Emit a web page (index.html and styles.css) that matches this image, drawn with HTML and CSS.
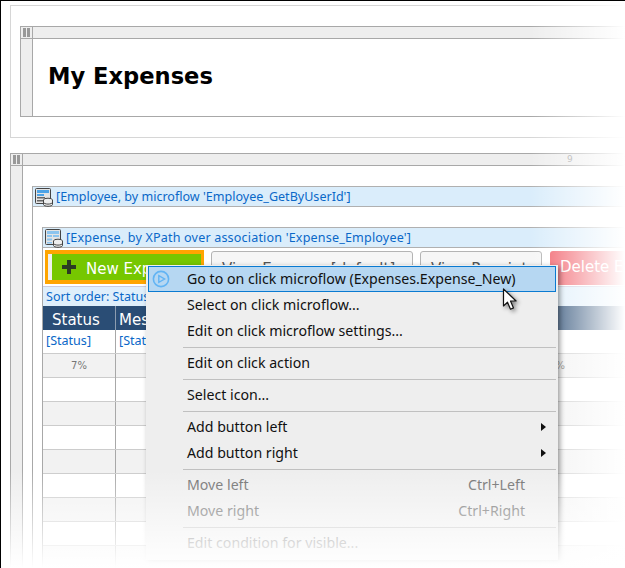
FILE: index.html
```html
<!DOCTYPE html>
<html>
<head>
<title>My Expenses</title>
<link rel="stylesheet" href="styles.css">
</head>
<body>
<div class="page">

	<div class="section">
		<div class="layout">
			<div class="handle"><i></i><i></i></div>
			<div class="topbar"></div>
			<div class="sidebar"></div>
			<div class="title-body"><h1>My Expenses</h1></div>
		</div>
	</div>

	<div class="layout layout-main">
		<div class="handle"><i></i><i></i></div>
		<div class="topbar"><span class="colsize">9</span></div>
		<div class="sidebar"></div>
		<div class="main-body">
			<div class="dataview">
				<div class="dv-head">
					<svg class="dv-icon" width="18" height="19" viewBox="0 0 18 19">
						<rect x="0.5" y="0.5" width="15" height="15" rx="1" fill="#e4e4e4" stroke="#444"/>
						<rect x="2" y="2" width="12" height="3" fill="#4da3e6"/>
						<rect x="2" y="6" width="7" height="2" fill="#4da3e6"/>
						<rect x="2" y="9" width="8" height="1.5" fill="#666"/>
						<rect x="2" y="12" width="6" height="1.5" fill="#666"/>
						<ellipse cx="13" cy="12" rx="4.5" ry="1.8" fill="#eee" stroke="#444"/>
						<path d="M8.5 12v4.5c0 1 2 1.8 4.5 1.8s4.5-.8 4.5-1.8V12" fill="#eee" stroke="#444"/>
						<path d="M8.5 14.3c0 1 2 1.8 4.5 1.8s4.5-.8 4.5-1.8" fill="none" stroke="#444"/>
					</svg>
					<span>[Employee, by microflow 'Employee_GetByUserId']</span>
				</div>
				<div class="dv-body">
					<div class="dataview">
						<div class="dv-head dv-head-inner">
							<svg class="dv-icon" width="18" height="19" viewBox="0 0 18 19">
								<rect x="0.5" y="0.5" width="15" height="15" rx="1" fill="#e4e4e4" stroke="#444"/>
								<rect x="2" y="2" width="12" height="3" fill="#8cc4ee"/>
								<rect x="2" y="6" width="5" height="2" fill="#8cc4ee"/>
								<rect x="8" y="6" width="6" height="2" fill="#8cc4ee"/>
								<rect x="2" y="9.5" width="5" height="2" fill="#8cc4ee"/>
								<rect x="2" y="13" width="5" height="1.5" fill="#8cc4ee"/>
								<ellipse cx="13" cy="12" rx="4.5" ry="1.8" fill="#eee" stroke="#444"/>
								<path d="M8.5 12v4.5c0 1 2 1.8 4.5 1.8s4.5-.8 4.5-1.8V12" fill="#eee" stroke="#444"/>
								<path d="M8.5 14.3c0 1 2 1.8 4.5 1.8s4.5-.8 4.5-1.8" fill="none" stroke="#444"/>
							</svg>
							<span>[Expense, by XPath over association 'Expense_Employee']</span>
						</div>
						<div class="toolbar">
							<div class="btn btn-new">
								<svg width="14" height="14" viewBox="0 0 14 14"><path d="M5 0h4v5h5v4H9v5H5V9H0V5h5z" fill="#2c3a24"/></svg>
								<span class="btn-new-label">New Expense</span>
							</div>
							<div class="btn btn-view btn-default">View Expense [default]</div>
							<div class="btn btn-view btn-receipt">View Receipt</div>
							<div class="btn btn-delete">Delete Expense</div>
						</div>
						<div class="sortbar">Sort order: Status</div>
						<div class="grid-row grid-head"><div>Status</div><div>Message</div><div></div></div>
						<div class="grid-row grid-attr"><div>[Status]</div><div>[Status]</div><div></div></div>
						<div class="grid-row grid-pct alt"><div>7%</div><div></div><div>7%</div></div>
						<div class="grid-row"><div></div><div></div><div></div></div>
						<div class="grid-row alt"><div></div><div></div><div></div></div>
						<div class="grid-row"><div></div><div></div><div></div></div>
						<div class="grid-row alt"><div></div><div></div><div></div></div>
						<div class="grid-row"><div></div><div></div><div></div></div>
						<div class="grid-row alt"><div></div><div></div><div></div></div>
						<div class="grid-row"><div></div><div></div><div></div></div>
						<div class="grid-row alt"><div></div><div></div><div></div></div>
					</div>
				</div>
			</div>
		</div>
	</div>

	<div class="fade-right"></div>

	<div class="menu">
		<div class="item active">
			<svg class="item-icon" width="18" height="18" viewBox="0 0 18 18">
				<circle cx="9" cy="9" r="7.6" fill="none" stroke="#62b4f4" stroke-width="1.6"/>
				<path d="M6.8 5.6L12.6 9l-5.8 3.4z" fill="none" stroke="#62b4f4" stroke-width="1.4"/>
			</svg>
			Go to on click microflow (Expenses.Expense_New)
		</div>
		<div class="item">Select on click microflow...</div>
		<div class="item">Edit on click microflow settings...</div>
		<div class="sep"></div>
		<div class="item">Edit on click action</div>
		<div class="sep"></div>
		<div class="item">Select icon...</div>
		<div class="sep"></div>
		<div class="item">Add button left<span class="arrow"></span></div>
		<div class="item">Add button right<span class="arrow"></span></div>
		<div class="sep"></div>
		<div class="item disabled">Move left<span class="shortcut">Ctrl+Left</span></div>
		<div class="item disabled">Move right<span class="shortcut">Ctrl+Right</span></div>
		<div class="sep"></div>
		<div class="item disabled">Edit condition for visible...</div>
	</div>

	<svg class="cursor" width="20" height="26" viewBox="0 0 20 26">
		<path d="M1.5 1v17l4-3.8 3 7 3-1.3-3-6.9h5.6z" fill="#fff" stroke="#111" stroke-width="1.2" stroke-linejoin="round"/>
	</svg>

	<div class="fade-bottom"></div>
</div>
</body>
</html>
```
FILE: styles.css
```css
html, body {
	margin: 0;
	padding: 0;
	background: #fff;
}

.page {
	position: relative;
	box-sizing: border-box;
	width: 625px;
	height: 568px;
	overflow: hidden;
	padding: 4px 0 0 9px;
	background: #fff;
	border-top: 1px solid #000;
	border-left: 1px solid #000;
	font-family: "Noto Sans", sans-serif;
}

.section {
	padding: 20px 0 20px 9px;
	border: 1px solid #d6d6d6;
	border-right: 0;
}

.layout {
	display: grid;
	grid-template-columns: 12px 1fr;
	grid-template-rows: 12px 1fr;
	border: 1px solid #a8a8a8;
	border-right: 0;
}

.layout-main {
	margin-top: 15px;
	border-bottom: 0;
}

.handle {
	display: flex;
	gap: 1px;
	justify-content: center;
	padding-top: 1px;
	box-sizing: border-box;
	background: #eee;
	border-right: 1px solid #a8a8a8;
	border-bottom: 1px solid #a8a8a8;
}

.handle i {
	display: block;
	width: 3px;
	height: 9px;
	background: #999;
}

.topbar {
	box-sizing: border-box;
	padding-left: 544px;
	background: #eee;
	border-bottom: 1px solid #a8a8a8;
}

.colsize {
	display: block;
	font: 9px/10px "DejaVu Sans", sans-serif;
	color: #999;
}

.sidebar {
	background: #eee;
	border-right: 1px solid #a8a8a8;
}

.title-body {
	display: flex;
	align-items: center;
	height: 77px;
	padding: 0 0 4px 15px;
	box-sizing: border-box;
}

h1 {
	margin: 0;
	font: bold 22.6px "DejaVu Sans", sans-serif;
	color: #000;
}

.main-body {
	padding: 20px 0 0 9px;
}

.dataview {
	border-top: 1px solid #b0b0b0;
	border-left: 1px solid #a8a8a8;
}

.dv-head {
	display: flex;
	align-items: center;
	gap: 3px;
	height: 19px;
	padding-left: 2px;
	background: #daedfb;
	border-bottom: 1px solid #b0b0b0;
	font-size: 12.55px;
	color: #0a68c8;
	white-space: nowrap;
}

.dv-head-inner {
	letter-spacing: .18px;
}

.dv-icon {
	flex: none;
	margin-top: 2px;
}

.dv-body {
	padding: 20px 0 0 9px;
}

.toolbar {
	display: flex;
	height: 38px;
	padding: 2px 0 0 2px;
	box-sizing: border-box;
	font: 15px "DejaVu Sans", sans-serif;
	white-space: nowrap;
}

.btn {
	box-sizing: border-box;
	height: 34px;
	overflow: hidden;
}

.btn-new {
	display: flex;
	align-items: center;
	gap: 10px;
	flex: none;
	width: 159px;
	padding-left: 14px;
	background: #76c700;
	border: solid #ffa500;
	border-width: 4px 3px;
	box-shadow: inset 4px 0 0 #f0f0f0;
	color: #fff;
}

.btn-new svg {
	flex: none;
}

.btn-new-label {
	margin-top: 3px;
}

.btn-view {
	flex: none;
	margin: 1px 0 0 7px;
	padding: 8px 0 0 10px;
	background: #f6f6f6;
	border: 1px solid #b4b4b4;
	border-radius: 3px;
	color: #555;
}

.btn-default {
	width: 202px;
}

.btn-receipt {
	width: 122px;
}

.btn-delete {
	flex: none;
	width: 160px;
	margin: 1px 0 0 8px;
	padding: 7px 0 0 10px;
	background: #f1626c;
	border-radius: 3px;
	color: #fff;
}

.sortbar {
	height: 20px;
	line-height: 19px;
	box-sizing: border-box;
	padding-left: 3px;
	background: #dfeffb;
	border-top: 1px solid #ccd;
	font-size: 12.55px;
	color: #0a68c8;
}

.grid-row {
	display: grid;
	grid-template-columns: 73px 405px 72px 1fr;
	box-sizing: border-box;
	height: 24px;
	border-bottom: 1px solid #ccc;
	white-space: nowrap;
}

.grid-row > div:first-child {
	border-right: 1px solid #a8a8a8;
}

.alt {
	background: #f2f2f2;
}

.grid-head {
	background: #2a4d75;
	border-bottom: 0;
	font: 15px/28px "DejaVu Sans", sans-serif;
	color: #fff;
}

.grid-head > div {
	padding-left: 3px;
}

.grid-head > div:first-child {
	padding-left: 9px;
	border-right-color: #8d9db0;
}

.grid-attr {
	font-size: 12.55px;
	line-height: 21px;
	color: #0a68c8;
}

.grid-attr > div {
	padding-left: 3px;
}

.grid-pct {
	font: 10px/24px "DejaVu Sans", sans-serif;
	color: #777;
	text-align: center;
}

.fade-right {
	position: absolute;
	top: -1px;
	right: 0;
	width: 95px;
	height: 569px;
	background: linear-gradient(to right, rgba(255,255,255,0), #fff);
}

.menu {
	position: absolute;
	left: 145px;
	top: 264px;
	width: 412px;
	box-sizing: border-box;
	padding: 1px 2px 4px;
	background: #eee;
	box-shadow: 2px 2px 5px rgba(0,0,0,.4);
	font-size: 14.17px;
	color: #111;
	white-space: nowrap;
}

.item {
	position: relative;
	display: flex;
	align-items: center;
	box-sizing: border-box;
	height: 26px;
	padding: 0 0 2px 39px;
}

.item.active {
	background: #b6d7f2;
	border: 1px solid #0a7ad1;
	padding: 0 0 2px 38px;
}

.item-icon {
	position: absolute;
	left: 3px;
	top: 3px;
}

.item.disabled {
	color: #6d6d6d;
}

.shortcut {
	margin-left: auto;
	margin-right: 31px;
}

.arrow {
	margin-left: auto;
	margin-right: 10px;
	margin-top: 2px;
	border-left: 5px solid #111;
	border-top: 4px solid transparent;
	border-bottom: 4px solid transparent;
}

.sep {
	height: 1px;
	margin: 3px 0 2px 35px;
	background: #c0c0c0;
}

.cursor {
	position: absolute;
	left: 501px;
	top: 287px;
	filter: drop-shadow(2px 2px 2px rgba(0,0,0,.45));
}

.fade-bottom {
	position: absolute;
	left: -1px;
	bottom: 0;
	width: 626px;
	height: 98px;
	background: linear-gradient(to bottom, rgba(255,255,255,0), #fff);
}
```
